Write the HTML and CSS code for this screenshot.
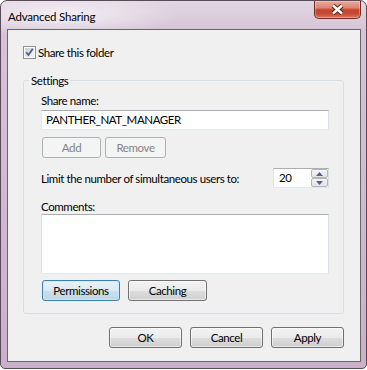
FILE: index.html
```html
<!DOCTYPE html>
<html lang="en">
<head>
  <meta charset="UTF-8" />
  <title>Advanced Sharing</title>
  <link rel="stylesheet" href="styles.css">
</head>
<body>
  <div class="window">
    <div class="titlebar">
      <span class="title">Advanced Sharing</span>
      <div class="close-btn">
        <svg width="15" height="11" viewBox="0 0 15 11">
          <path d="M3 1.5 L12 9.5 M12 1.5 L3 9.5" stroke="#4a1e18" stroke-width="4.4" fill="none"/>
          <path d="M3 1.5 L12 9.5 M12 1.5 L3 9.5" stroke="#ffffff" stroke-width="2.4" fill="none"/>
        </svg>
      </div>
    </div>

    <div class="client">
      <div class="check-row">
        <svg class="checkbox" width="13" height="13" viewBox="0 0 13 13">
          <defs>
            <linearGradient id="boxFill" x1="0" y1="0" x2="1" y2="1">
              <stop offset="0" stop-color="#cbcfd5"/>
              <stop offset="1" stop-color="#f7f7f7"/>
            </linearGradient>
          </defs>
          <rect x="0.5" y="0.5" width="12" height="12" fill="#fff" stroke="#8e8f8f"/>
          <rect x="2" y="2" width="9" height="9" fill="url(#boxFill)"/>
          <path d="M3.2 6.2 L5.4 9 L9.8 2.8" stroke="#4b5f8e" stroke-width="1.8" fill="none"/>
        </svg>
        <span>Share this folder</span>
      </div>

      <fieldset class="group">
        <legend>Settings</legend>
        <div class="field-label">Share name:</div>
        <div class="textbox">PANTHER_NAT_MANAGER</div>
        <div class="btn-row small-row">
          <button class="btn disabled add-btn">Add</button>
          <button class="btn disabled remove-btn">Remove</button>
        </div>
        <div class="limit-row">
          <span>Limit the number of simultaneous users to:</span>
          <div class="spin">
            <span class="spin-value">20</span>
            <div class="spin-btns">
              <span class="spin-btn">
                <svg width="7" height="4" viewBox="0 0 7 4"><polygon points="0,4 3.5,0 7,4" fill="#4f639a"/></svg>
              </span>
              <span class="spin-btn">
                <svg width="7" height="4" viewBox="0 0 7 4"><polygon points="0,0 7,0 3.5,4" fill="#4f639a"/></svg>
              </span>
            </div>
          </div>
        </div>
        <div class="field-label comments-label">Comments:</div>
        <div class="textarea"></div>
        <div class="btn-row">
          <button class="btn default-btn perm-btn">Permissions</button>
          <button class="btn caching-btn">Caching</button>
        </div>
      </fieldset>

      <div class="dialog-buttons">
        <button class="btn dlg-btn">OK</button>
        <button class="btn dlg-btn">Cancel</button>
        <button class="btn dlg-btn">Apply</button>
      </div>
    </div>
  </div>
</body>
</html>
```

FILE: styles.css
```css
body {
  margin: 0;
  background: #fff;
  font-family: Lato, "Open Sans", sans-serif;
  font-size: 11.5px;
  letter-spacing: -0.4px;
  color: #000;
}

/* Aero glass frame */
.window {
  width: 367px;
  height: 369px;
  box-sizing: border-box;
  border: 1px solid #5a4a5a;
  border-radius: 7px 7px 5px 5px;
  padding: 0 5px 6px 6px;
  display: flex;
  flex-direction: column;
  background:
    radial-gradient(ellipse 120px 22px at 60px 14px, rgba(255, 255, 255, 0.7), rgba(255, 255, 255, 0) 100%),
    linear-gradient(180deg, #e2d6e2 0%, #d6c4d6 30px, #cab0ca 100%);
}

.titlebar {
  height: 28px;
  display: flex;
  justify-content: space-between;
  align-items: flex-start;
}

.title {
  margin: 8px 0 0 1px;
  line-height: 15px;
  letter-spacing: -0.2px;
}

.close-btn {
  width: 47px;
  height: 18px;
  box-sizing: border-box;
  border: 1px solid #6e2c22;
  border-top: none;
  border-radius: 0 0 5px 5px;
  background: linear-gradient(180deg, #e8a898 0%, #dd8572 40%, #c8442c 52%, #c64a32 75%, #d97c64 100%);
  box-shadow: inset 0 0 0 1px rgba(255, 255, 255, 0.3);
  display: flex;
  align-items: center;
  justify-content: center;
}

.client {
  flex: 1;
  border: 1px solid #676767;
  background: #f0f0f0;
  padding: 16px 16px 0 15px;
  display: flex;
  flex-direction: column;
}

.check-row {
  display: flex;
  align-items: center;
  gap: 2px;
  height: 13px;
  line-height: 13px;
}

.checkbox {
  display: block;
}

/* Settings group box */
.group {
  margin: 14px 0 0;
  padding: 5px 14px 12px 17px;
  border: 1px solid #d5dfe5;
  border-radius: 3px;
  min-width: 0;
}

.group legend {
  padding: 0 2px;
  margin-left: -12px;
  line-height: 15px;
}

.field-label {
  line-height: 15px;
}

.textbox,
.textarea,
.spin {
  box-sizing: border-box;
  border: 1px solid;
  border-color: #abadb3 #dbdfe6 #e3e9ef #e2e3ea;
  background: #fff;
}

.textbox {
  height: 20px;
  margin-top: 2px;
  padding: 0 4px;
  line-height: 18px;
}

.textarea {
  height: 60px;
}

.btn {
  box-sizing: border-box;
  height: 21px;
  padding: 0;
  border: 1px solid #707070;
  border-radius: 3px;
  background: linear-gradient(180deg, #f2f2f2 0%, #ebebeb 50%, #dddddd 51%, #cfcfcf 100%);
  box-shadow: inset 0 0 0 1px rgba(255, 255, 255, 0.55);
  font: inherit;
  letter-spacing: inherit;
  color: #000;
}

.btn.disabled {
  border-color: #adb2b5;
  background: #f4f4f4;
  box-shadow: none;
  color: #838383;
}

.btn.default-btn {
  border-color: #3c7fb1;
  background: linear-gradient(180deg, #e8f2f8 0%, #dce9f1 50%, #cadfeb 51%, #bed6e4 100%);
  box-shadow: inset 0 0 0 1px rgba(200, 235, 255, 0.8);
}

.btn-row {
  display: flex;
  gap: 8px;
  margin-left: 1px;
  margin-top: 6px;
}

.small-row {
  gap: 4px;
  margin-top: 7px;
}

.add-btn { width: 59px; }
.remove-btn { width: 61px; }
.perm-btn { width: 78px; }
.caching-btn { width: 79px; }

.limit-row {
  margin-top: 10px;
  display: flex;
  justify-content: space-between;
  align-items: center;
}

.spin {
  width: 56px;
  height: 20px;
  display: flex;
  justify-content: space-between;
}

.spin-value {
  padding-left: 5px;
  line-height: 18px;
}

.spin-btns {
  width: 17px;
  display: flex;
  flex-direction: column;
}

.spin-btn {
  flex: 1;
  box-sizing: border-box;
  border: 1px solid #b3b6ba;
  border-radius: 2px;
  background: linear-gradient(180deg, #f6f6f6, #e2e2e2);
  display: flex;
  align-items: center;
  justify-content: center;
}

.comments-label {
  margin-top: 11px;
}

.dialog-buttons {
  margin-top: 13px;
  display: flex;
  justify-content: flex-end;
  gap: 8px;
}

.dlg-btn {
  width: 73px;
}
```
